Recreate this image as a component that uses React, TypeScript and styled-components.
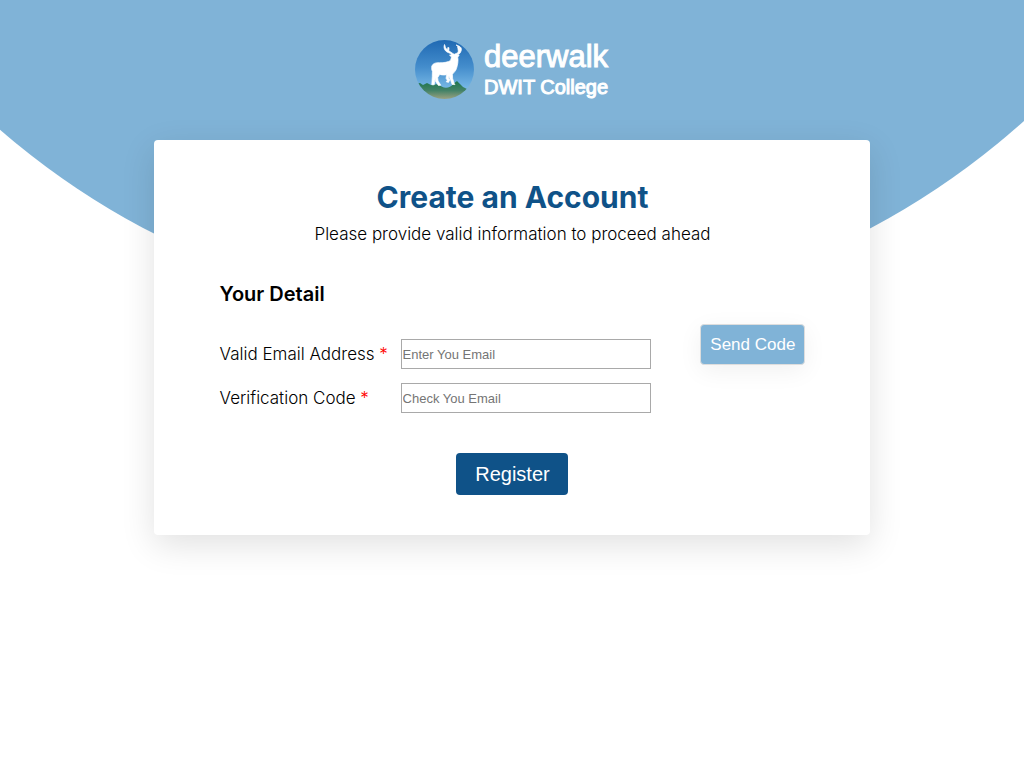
import React from "react";
import styled, { createGlobalStyle } from "styled-components";

const GlobalStyle = createGlobalStyle`
  *, *::before, *::after {
    box-sizing: border-box;
  }

  body {
    margin: 0;
    background: #ffffff;
    color: #000000;
    font-family: Inter, "Open Sans", sans-serif;
    font-size: 17px;
    line-height: 20px;
  }
`;

const Page = styled.div`
  position: relative;
  min-height: 100vh;
  padding: 40px 0;
  overflow: hidden;
`;

const Backdrop = styled.div`
  position: absolute;
  inset: 0;
  z-index: -1;
  background: #80b3d7;
  clip-path: circle(774px at calc(50% - 5px) -455px);
`;

const Brand = styled.header`
  display: flex;
  justify-content: center;
  gap: 9px;
  height: 60px;
  margin-bottom: 40px;
`;

const BrandText = styled.div`
  display: flex;
  flex-direction: column;
  width: 125px;
  color: #ffffff;
  font-family: "Liberation Sans", Arial, sans-serif;
  white-space: nowrap;
`;

const BrandName = styled.span`
  font-size: 31px;
  line-height: 34px;
  -webkit-text-stroke: 1px #ffffff;
`;

const BrandUnit = styled.span`
  font-size: 20px;
  line-height: 26px;
  -webkit-text-stroke: 1px #ffffff;
`;

const Card = styled.main`
  width: 70%;
  margin: 0 auto;
  padding: 40px 65px 40px 66px;
  background: #ffffff;
  border-radius: 4px;
  box-shadow: 0 10px 34px rgba(0, 0, 0, 0.12);
`;

const Title = styled.h1`
  margin: 0;
  color: #0f5288;
  font-size: 30px;
  font-weight: 700;
  line-height: 34px;
  text-align: center;
`;

const Subtitle = styled.p`
  margin: 10px 0 40px;
  font-weight: 300;
  text-align: center;
`;

const SectionTitle = styled.h2`
  margin: 0 0 20px;
  font-size: 20px;
  font-weight: 600;
`;

const Form = styled.form`
  display: flex;
  flex-direction: column;
`;

const Details = styled.div`
  display: flex;
  align-items: flex-start;
  justify-content: space-between;
`;

const Fields = styled.div`
  display: flex;
  flex-direction: column;
  gap: 14px;
  padding-top: 15px;
`;

const Field = styled.div`
  display: grid;
  grid-template-columns: 181px 250px;
  align-items: center;
`;

const Label = styled.label`
  font-weight: 300;
`;

const Required = styled.span`
  color: #ff0000;
`;

const TextInput = styled.input`
  width: 100%;
  height: 30px;
  padding: 1px;
  border: 1px solid #a9a9a9;
  background: #ffffff;
  font-family: "Liberation Sans", Arial, sans-serif;
  font-size: 13px;

  &::placeholder {
    color: #757575;
  }
`;

const Button = styled.button`
  border: 0;
  border-radius: 4px;
  color: #ffffff;
  font-family: "Liberation Sans", Arial, sans-serif;
  cursor: pointer;
`;

const SendButton = styled(Button)`
  height: 41px;
  padding: 0 9px;
  border: 1px solid #dddddd;
  background: #80b3d7;
  font-size: 17px;
  box-shadow: 0 6px 24px rgba(0, 0, 0, 0.06);
`;

const RegisterButton = styled(Button)`
  align-self: center;
  width: 112px;
  height: 42px;
  margin-top: 40px;
  background: #0f5288;
  font-size: 20px;
`;

const Logo = () => (
  <svg width="60" height="60" viewBox="0 0 60 60" role="img" aria-label="Deerwalk logo">
    <defs>
      <linearGradient id="sky" x1="0" y1="0" x2="0" y2="1">
        <stop offset="0" stopColor="#1f69b3" />
        <stop offset="0.45" stopColor="#448dcc" />
        <stop offset="0.8" stopColor="#76b7e5" />
      </linearGradient>
      <linearGradient id="hills" x1="0" y1="0" x2="0" y2="1">
        <stop offset="0" stopColor="#1d754c" />
        <stop offset="0.5" stopColor="#438267" />
        <stop offset="1" stopColor="#a5a583" />
      </linearGradient>
      <clipPath id="disc">
        <circle cx="29.5" cy="29.5" r="29.5" />
      </clipPath>
    </defs>
    <g clipPath="url(#disc)">
      <rect width="60" height="60" fill="url(#sky)" />
      <path
        fill="url(#hills)"
        d="M0 44 L5 43 L8 45 L12 43 L16 45 L24 44 C27 49 35 49 38 44 L42 41 L45 44 L48 47 L52 49 L60 50 V60 H0 Z"
      />
    </g>
    <path
      fill="#ffffff"
      stroke="#ffffff"
      strokeWidth="0.7"
      strokeLinejoin="round"
      d="M16.8 26 C18 23.3 21 22.4 24.5 22.7 C29 23 33 22 35.5 20.5 L36.5 17 L34.5 15.2 L37 14.4 C35 12.8 32.2 12.7 30.5 10.8 C28.7 8.7 28.8 6.5 29.5 4.5 C30.2 5.4 30 7.2 31.2 8.7 L32.6 9.7 L32.8 7.5 L34 7.7 L33.8 10.8 L37.4 13.2 L39.2 14.3 L42.5 12.9 C43.9 11.9 43 9.3 42.5 6.5 L43.7 6.4 L44.4 9.6 C45 7.4 43.8 6.4 41 5 C46 6.4 47.2 8.3 46 11.2 C45.4 13.4 43.7 14.4 42.2 15 L44.2 15.1 L42.8 17.2 C43.4 20.5 42.8 24.6 41.5 28.5 C40.6 31.4 38.6 32.6 37.4 34.4 L37.6 38.4 L39.2 43.4 L40 44.6 L37.1 44.4 L35.6 40.1 L33.9 36.1 L33.6 38.3 L35 39.6 L33.5 42.4 L31.2 41.8 L32.3 40.2 L31 38.3 L31.7 34.7 C28.7 35.5 26 34.7 24.7 34.4 L22.7 37.6 L23.1 41 L25.8 45.2 L23.4 45.5 L20.6 41.5 L20.2 37.7 L19.2 44.8 L16.8 44.8 L17.3 36.4 L17.4 31.3 C16.6 29.9 16.5 28 16.8 26 Z"
    />
  </svg>
);

type FieldProps = {
  id: string;
  label: string;
  type: string;
  placeholder: string;
};

const FormField = ({ id, label, type, placeholder }: FieldProps) => (
  <Field>
    <Label htmlFor={id}>
      {label} <Required>*</Required>
    </Label>
    <TextInput id={id} name={id} type={type} placeholder={placeholder} required />
  </Field>
);

export default function App() {
  return (
    <>
      <GlobalStyle />
      <Page>
        <Backdrop />
        <Brand>
          <Logo />
          <BrandText>
            <BrandName>deerwalk</BrandName>
            <BrandUnit>DWIT College</BrandUnit>
          </BrandText>
        </Brand>
        <Card>
          <Title>Create an Account</Title>
          <Subtitle>Please provide valid information to proceed ahead</Subtitle>
          <Form>
            <SectionTitle>Your Detail</SectionTitle>
            <Details>
              <Fields>
                <FormField id="email" label="Valid Email Address" type="email" placeholder="Enter You Email" />
                <FormField id="code" label="Verification Code" type="text" placeholder="Check You Email" />
              </Fields>
              <SendButton type="button">Send Code</SendButton>
            </Details>
            <RegisterButton type="submit">Register</RegisterButton>
          </Form>
        </Card>
      </Page>
    </>
  );
}
